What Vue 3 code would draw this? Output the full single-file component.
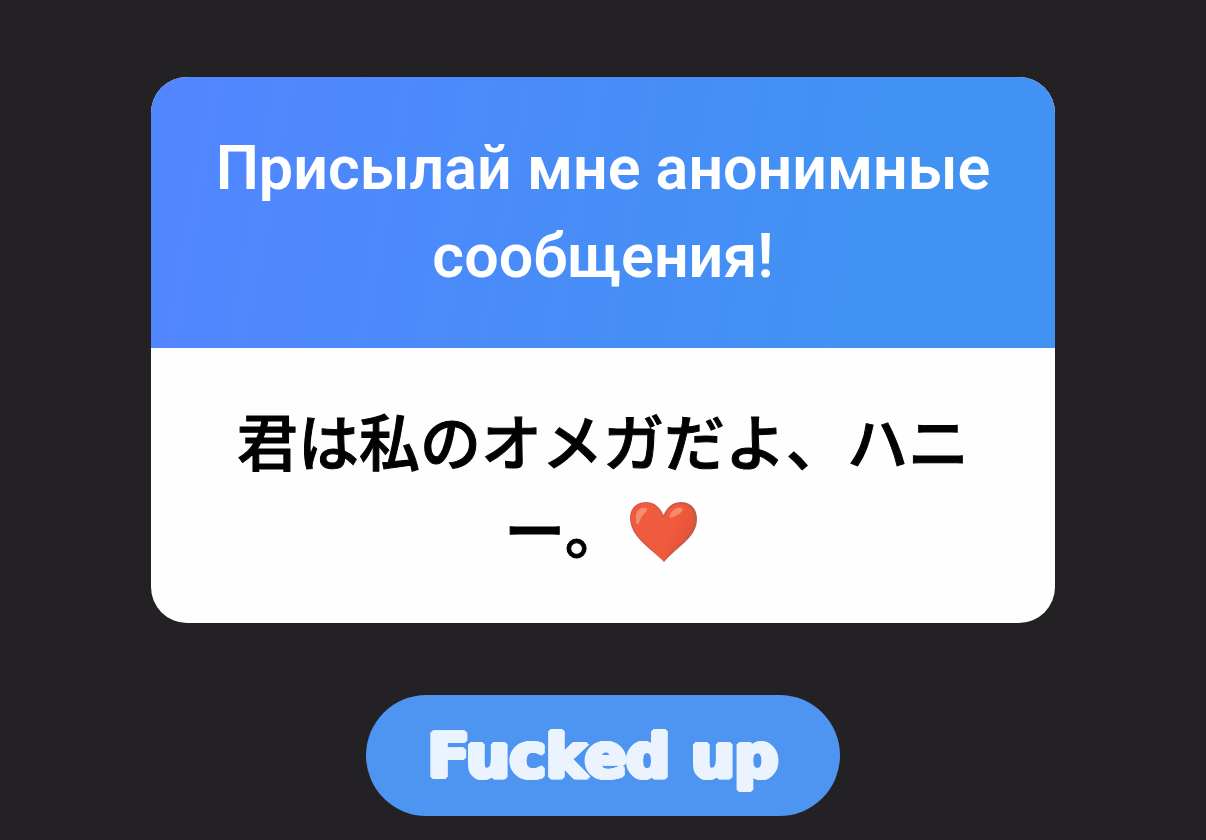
<script setup>
const prompt = 'Присылай мне анонимные сообщения!'
const message = '君は私のオメガだよ、ハニー。'
const reply = 'Fucked up'
</script>

<template>
  <main class="story">
    <article class="card">
      <header class="card-header">
        <h1 class="prompt">{{ prompt }}</h1>
      </header>
      <p class="message" lang="ja">{{ message }}<svg class="heart" viewBox="0 0 76 62" role="img" aria-label="❤️">
          <defs>
            <linearGradient id="heart-fill" x1="0" y1="0" x2="1" y2="0.4">
              <stop offset="0.7" stop-color="#f15b3d" />
              <stop offset="1" stop-color="#e5533a" />
            </linearGradient>
          </defs>
          <path fill="#c75a48" d="M38 61C34 56 24 49 17 42C9 34 4 26 4 17C4 7 11 1 20 1C28 1 34 6 37.500 14C41 6 47 1 55 1C65 1 71 8 71 18C71 28 65 36 57 43C50 49 42 56 38 61Z" />
          <path fill="url(#heart-fill)" d="M37.500 60C33 55 25 48 18 41C10 33 5 25 5 17C5 8 11 2 19 2C28 2 34 8 37.500 17C41 8 47 3 54 3C63 3 68 9 68 18C68 27 63 34 56 41C49 47 42 54 37.500 60Z" />
          <path fill="#f58c70" d="M10 19C9 11 13 6 20 7C23 8 20 11 17 14C14 17 14 22 12 23C10 24 10 22 10 19Z" />
          <path fill="#f58c70" d="M43 16C45 10 50 6 55 7C58 8 56 11 53 13C49 15 45 18 43 16Z" />
        </svg></p>
    </article>
    <button class="reply" type="button">{{ reply }}</button>
  </main>
</template>

<style>
body {
  margin: 0;
  background: #232124;
}
</style>

<style scoped>
.story {
  box-sizing: border-box;
  min-height: 100vh;
  padding: 77px 24px 23px;
  display: flex;
  flex-direction: column;
  align-items: center;
  gap: 72px;
  background: #232124;
}

.card {
  width: 78%;
  max-width: 905px;
  border-radius: 36px;
  overflow: hidden;
  background: #fefefe;
}

.card-header {
  padding: 47px 48px 48px;
  background: linear-gradient(100deg, #5286ff 4%, #478df7 50%, #4192f3 82%);
}

.prompt {
  margin: 0;
  color: #fff;
  font-family: Roboto, "Open Sans", sans-serif;
  font-size: 61px;
  font-weight: 600;
  line-height: 88px;
  text-align: center;
}

.message {
  margin: 0;
  padding: 48px 72px 51px;
  color: #020202;
  font-family: "Noto Sans CJK JP", sans-serif;
  font-size: 61px;
  font-weight: 500;
  line-height: 88px;
  line-break: loose;
  text-align: center;
  -webkit-text-stroke: 1px #020202;
}

.heart {
  width: 76px;
  height: 62px;
  vertical-align: -9px;
}

/* The ring of shadows rounds off the corners of the letters. */
.reply {
  padding: 16px 62px;
  border: 0;
  border-radius: 61px;
  background: #4e94f1;
  color: #ebf3ff;
  font-family: "DejaVu Sans", sans-serif;
  font-size: 61px;
  font-weight: 700;
  line-height: 89px;
  text-shadow:
    3px 0 #ebf3ff, -3px 0 #ebf3ff, 0 2px #ebf3ff, 0 -2px #ebf3ff,
    1px 2px #ebf3ff, -1px 2px #ebf3ff, 1px -2px #ebf3ff, -1px -2px #ebf3ff,
    2px 1px #ebf3ff, -2px 1px #ebf3ff, 2px -1px #ebf3ff, -2px -1px #ebf3ff;
}
</style>
